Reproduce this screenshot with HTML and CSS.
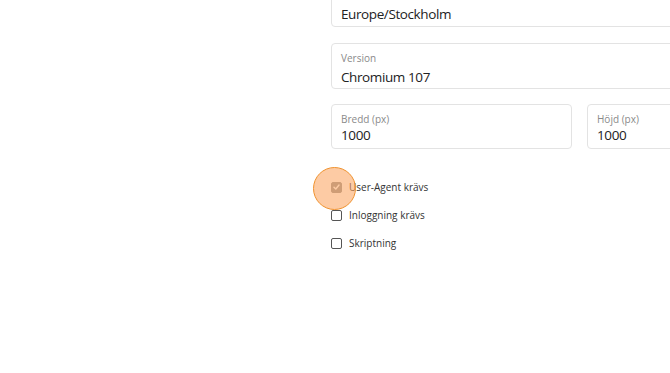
FILE: index.html
```html
<!DOCTYPE html>
<html>
<head>
<meta charset="utf-8">
<link rel="stylesheet" href="styles.css">
</head>
<body>
<div class="page">
  <div class="form">
    <div class="field field-top">
      <div class="value">Europe/Stockholm</div>
    </div>
    <div class="field field-version">
      <div class="label">Version</div>
      <div class="value">Chromium 107</div>
    </div>
    <div class="row">
      <div class="field half">
        <div class="label">Bredd (px)</div>
        <div class="value">1000</div>
      </div>
      <div class="field half">
        <div class="label">Höjd (px)</div>
        <div class="value">1000</div>
      </div>
    </div>
    <div class="checks">
      <label class="check">
        <span class="box checked">
          <svg viewBox="0 0 10 10" width="10" height="10"><path d="M2.2 5.2 L4.2 7.2 L7.8 2.8" fill="none" stroke="#fff" stroke-width="1.6" stroke-linecap="round" stroke-linejoin="round"/></svg>
          <span class="highlight"></span>
        </span>
        <span class="text">User-Agent krävs</span>
      </label>
      <label class="check">
        <span class="box"></span>
        <span class="text">Inloggning krävs</span>
      </label>
      <label class="check">
        <span class="box"></span>
        <span class="text">Skriptning</span>
      </label>
    </div>
  </div>
</div>
</body>
</html>
```
FILE: styles.css
```css
html, body {
  margin: 0;
  padding: 0;
  background: #ffffff;
}
.page {
  width: 670px;
  height: 373px;
  overflow: hidden;
  font-family: "Open Sans", "Noto Sans", sans-serif;
  color: #222;
}
.form {
  margin-left: 331px;
  width: 497px;
  display: flex;
  flex-direction: column;
}
.field {
  box-sizing: border-box;
  border: 1px solid #e3e3e3;
  border-radius: 4px;
  padding: 7px 9px 5px 9px;
  height: 46px;
  margin-bottom: 15px;
}
.field-top {
  margin-top: -20px;
  height: 47px;
  padding-top: 24px;
  margin-bottom: 16px;
}
.field-version {
  padding-top: 7px;
  margin-bottom: 15px;
}
.field-version .label {
  margin-bottom: 3px;
}
.label {
  font-size: 10px;
  line-height: 14px;
  color: #8a8a8a;
}
.value {
  font-size: 13.5px;
  letter-spacing: -0.4px;
  line-height: 18px;
  color: #222;
}
.row {
  display: flex;
  gap: 15px;
}
.half {
  width: 241px;
  height: 45px;
  flex: none;
}
.checks {
  display: flex;
  flex-direction: column;
  gap: 14px;
  margin-top: 16px;
}
.check {
  display: flex;
  align-items: center;
  gap: 7px;
  height: 14px;
}
.box {
  position: relative;
  box-sizing: border-box;
  width: 11px;
  height: 11px;
  border: 1px solid #555;
  border-radius: 2px;
  background: #fff;
  flex: none;
  display: flex;
  align-items: center;
  justify-content: center;
}
.box.checked {
  background: #9a9a9a;
  border-color: #9a9a9a;
}
.box svg {
  position: relative;
  z-index: 1;
}
.highlight {
  position: absolute;
  left: -19px;
  top: -16px;
  width: 41px;
  height: 41px;
  border-radius: 50%;
  border: 1.5px solid #f0922e;
  background: rgba(252, 160, 90, 0.55);
  z-index: 2;
}
.text {
  font-size: 10px;
  color: #333;
}
```
